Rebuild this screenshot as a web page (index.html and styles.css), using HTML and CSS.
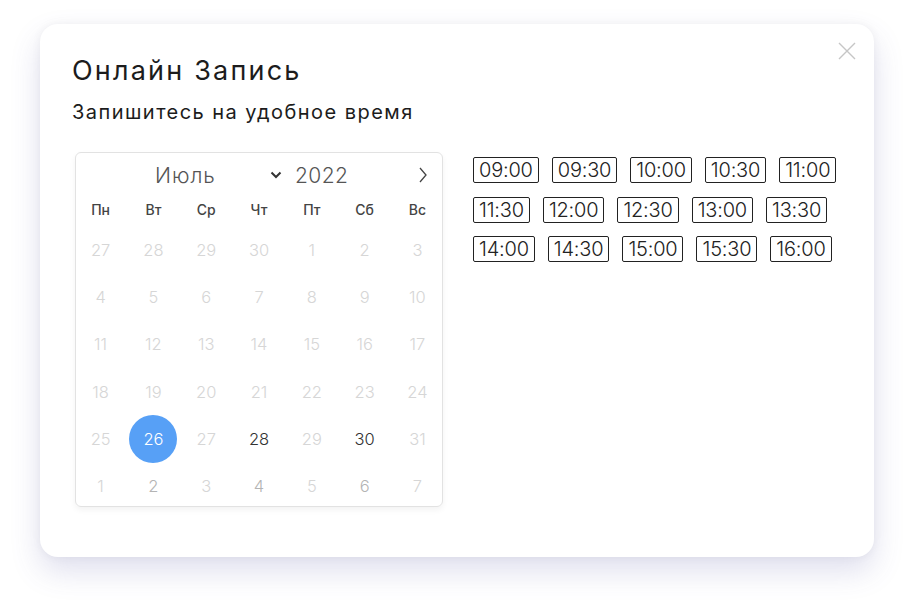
FILE: index.html
```html
<!DOCTYPE html>
<html lang="ru">
<head>
<meta charset="utf-8">
<title>Онлайн Запись</title>
<link rel="stylesheet" href="styles.css">
</head>
<body>
<div class="page">
  <div class="modal">
    <button class="close" aria-label="Закрыть">
      <svg width="18" height="18" viewBox="0 0 18 18"><path d="M1 1L17 17M17 1L1 17" stroke="#c6c6c6" stroke-width="1.4" fill="none"/></svg>
    </button>
    <h1 class="title">Онлайн Запись</h1>
    <p class="subtitle">Запишитесь на удобное время</p>
    <div class="content">
      <div class="calendar">
        <div class="cal-head">
          <span class="month">Июль</span>
          <svg class="chev" width="12" height="8" viewBox="0 0 12 8"><path d="M1.5 1.5L6 6L10.5 1.5" stroke="#333" stroke-width="2" fill="none"/></svg>
          <span class="year">2022</span>
          <svg class="next" width="8" height="16" viewBox="0 0 8 16"><path d="M1 1L7 8L1 15" stroke="#444" stroke-width="1.3" fill="none"/></svg>
        </div>
        <div class="weekdays">
          <span>Пн</span><span>Вт</span><span>Ср</span><span>Чт</span><span>Пт</span><span>Сб</span><span>Вс</span>
        </div>
        <div class="days">
          <span class="d off">27</span><span class="d off">28</span><span class="d off">29</span><span class="d off">30</span><span class="d off">1</span><span class="d off">2</span><span class="d off">3</span>
          <span class="d off">4</span><span class="d off">5</span><span class="d off">6</span><span class="d off">7</span><span class="d off">8</span><span class="d off">9</span><span class="d off">10</span>
          <span class="d off">11</span><span class="d off">12</span><span class="d off">13</span><span class="d off">14</span><span class="d off">15</span><span class="d off">16</span><span class="d off">17</span>
          <span class="d off">18</span><span class="d off">19</span><span class="d off">20</span><span class="d off">21</span><span class="d off">22</span><span class="d off">23</span><span class="d off">24</span>
          <span class="d off">25</span><span class="d sel"><i>26</i></span><span class="d off">27</span><span class="d on">28</span><span class="d off">29</span><span class="d on">30</span><span class="d off">31</span>
          <span class="d off">1</span><span class="d mid">2</span><span class="d off">3</span><span class="d mid">4</span><span class="d off">5</span><span class="d mid">6</span><span class="d off">7</span>
        </div>
      </div>
      <div class="slots">
        <span class="slot">09:00</span><span class="slot">09:30</span><span class="slot">10:00</span><span class="slot">10:30</span><span class="slot">11:00</span>
        <span class="slot">11:30</span><span class="slot">12:00</span><span class="slot">12:30</span><span class="slot">13:00</span><span class="slot">13:30</span>
        <span class="slot">14:00</span><span class="slot">14:30</span><span class="slot">15:00</span><span class="slot">15:30</span><span class="slot">16:00</span>
      </div>
    </div>
  </div>
</div>
</body>
</html>
```
FILE: styles.css
```css
* { box-sizing: border-box; }
html, body { margin: 0; padding: 0; background: #fff; }
body { font-family: Inter, "Open Sans", "DejaVu Sans", sans-serif; color: #222; }

.page { padding: 24px 40px 57px; }

.modal {
  position: relative;
  width: 834px;
  height: 533px;
  background: #fff;
  border-radius: 18px;
  padding: 31px 32px 0;
  box-shadow: 0 14px 30px rgba(80, 80, 160, 0.18), 0 0 10px rgba(0, 0, 0, 0.05);
}

.close {
  position: absolute;
  top: 18px;
  right: 18px;
  width: 18px;
  height: 18px;
  padding: 0;
  border: 0;
  background: none;
  display: block;
}
.close svg { display: block; }

.title {
  margin: 0;
  font-size: 27px;
  line-height: 32px;
  font-weight: 400;
  letter-spacing: 2.2px;
  color: #1c1c1c;
}
.subtitle {
  margin: 13px 0 0;
  font-size: 20px;
  line-height: 24px;
  font-weight: 400;
  letter-spacing: 1.45px;
  color: #1c1c1c;
}

.content {
  display: flex;
  align-items: flex-start;
  gap: 30px;
  margin-top: 28px;
}

.calendar {
  margin-left: 3px;
  width: 368px;
  height: 355px;
  border: 1px solid #e2e2e2;
  border-radius: 6px;
  box-shadow: 0 3px 6px rgba(0, 0, 0, 0.05);
}

.cal-head {
  height: 44px;
  display: flex;
  align-items: center;
  padding: 0 15px 0 79px;
}
.month {
  width: 115px;
  font-size: 21px;
  font-weight: 300;
  color: #555;
  letter-spacing: 1px;
}
.chev { display: block; }
.year {
  margin-left: 13px;
  font-size: 21px;
  font-weight: 300;
  color: #555;
  letter-spacing: 0.4px;
}
.next { display: block; margin-left: auto; }

.weekdays, .days {
  display: grid;
  grid-template-columns: repeat(7, 52.8px);
  justify-content: center;
}
.weekdays {
  height: 25px;
  align-items: center;
  justify-items: center;
  font-size: 14px;
  font-weight: 500;
  color: #444;
}
.days {
  margin-top: 6px;
  grid-auto-rows: 44px;
  row-gap: 3.2px;
}
.d {
  display: flex;
  align-items: center;
  justify-content: center;
  font-size: 16.5px;
  font-weight: 300;
  font-style: normal;
}
.off { color: #d6d6d6; }
.mid { color: #b4b4b4; }
.on { color: #333; }
.sel i {
  font-style: normal;
  width: 48px;
  height: 48px;
  border-radius: 50%;
  background: #57a0f6;
  color: #fff;
  display: flex;
  align-items: center;
  justify-content: center;
  flex: none;
}

.slots {
  width: 372px;
  margin-top: 5px;
  display: flex;
  flex-wrap: wrap;
  column-gap: 13px;
  row-gap: 13.5px;
}
.slot {
  display: block;
  height: 26px;
  border: 1px solid #222;
  border-radius: 2px;
  padding: 0 5px;
  font-size: 20px;
  line-height: 24px;
  font-weight: 300;
  letter-spacing: -0.2px;
  color: #222;
}
```
